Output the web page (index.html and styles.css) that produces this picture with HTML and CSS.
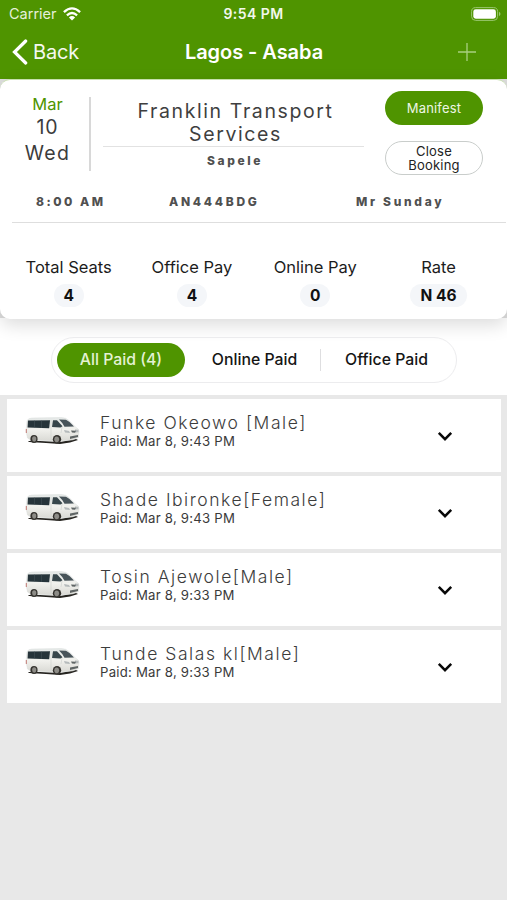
FILE: index.html
```html
<!DOCTYPE html>
<html lang="en">
<head>
<meta charset="utf-8">
<meta name="viewport" content="width=device-width, initial-scale=1">
<title>Lagos - Asaba</title>
<link rel="stylesheet" href="styles.css">
</head>
<body>
<svg class="defs" aria-hidden="true">
  <defs>
    <linearGradient id="body-paint" x1="0" y1="0" x2="0" y2="1">
      <stop offset="0" stop-color="#e4e8e7"/><stop offset=".5" stop-color="#f1f1ed"/><stop offset="1" stop-color="#d9d9d4"/>
    </linearGradient>
    <symbol id="van" viewBox="0 0 56 30">
      <path d="M3 25h12l20 1 16-3 2 1-8 2.500-10 1.500-14-1-17-1z" fill="#25231f"/>
      <path d="M2 5Q3 2 7 2L36 1.500q5 0 8 3l7 7q3 1 3 4l-.5 6-6 2.500-14 1.200-28-1.200-3-2L1 15z" fill="url(#body-paint)" stroke="#d5d8d6" stroke-width=".4"/>
      <path d="M3 4.500l22-.3-.8 8L2.500 11.500z" fill="#26343a"/>
      <path d="M9.500 4.500v7M16.500 4.500v7.500" stroke="#46555a" stroke-width=".5"/>
      <path d="M28 4.200l4 0 5.500 6-2 1.200-8.500-.5z" fill="#37464b"/>
      <path d="M34 3.500l7 .3q4 1.800 8 6.700l-9.500.2q-2-4-5.500-7.200z" fill="#48545a"/>
      <path d="M26 4v20M37 11l-1 6" stroke="#c4c8c6" stroke-width=".5" fill="none"/>
      <path d="M39 14l5 1 1 2-5-.5zM50 13.500l3.500.3v2.400l-3.500.3z" fill="#b5babb"/>
      <path d="M46 14.500l5 .2-1 2-3-.2zM45 20.500l8-1.500v2l-8 2z" fill="#5f6565"/>
      <path d="M.8 13h1.200v4H.8z" fill="#c98f8a"/>
      <ellipse cx="9" cy="23" rx="3.600" ry="4" fill="#35332f"/>
      <ellipse cx="9.200" cy="23" rx="2.100" ry="2.700" fill="#8d8c87"/>
      <ellipse cx="32" cy="23.300" rx="4.200" ry="4.300" fill="#35332f"/>
      <ellipse cx="31.700" cy="23.300" rx="2.400" ry="2.900" fill="#8d8c87"/>
    </symbol>
    <symbol id="chevron" viewBox="0 0 16 12">
      <path d="M1.800 1.900L8 8.200l6.200-6.300" fill="none" stroke="#080808" stroke-width="2.500"/>
    </symbol>
  </defs>
</svg>

<header class="header">
  <div class="status">
    <div class="status-left">
      <span>Carrier</span>
      <svg class="wifi" viewBox="0 0 18 14">
        <g fill="none" stroke="#fff" stroke-width="2.300">
          <path d="M.9 5.100Q9-2.400 17.100 5.100"/><path d="M3.900 8.300q5.100-4.500 10.200 0"/>
        </g>
        <path d="M5.900 10.400q3.100-2.700 6.200 0L9 13.600z" fill="#fff"/>
      </svg>
    </div>
    <span class="clock">9:54 PM</span>
    <svg class="battery" viewBox="0 0 30 14">
      <rect x=".6" y=".6" width="26" height="12.800" rx="4" fill="none" stroke="#9ac66f" stroke-width="1"/>
      <rect x="2.300" y="2.300" width="22.600" height="9.400" rx="2.400" fill="#fff"/>
      <path d="M28 4.800q3 2.200 0 4.400z" fill="#9ac66f"/>
    </svg>
  </div>
  <nav class="nav">
    <a class="back">
      <svg class="back-icon" viewBox="0 0 16 26"><path d="M13.700 2L2.500 13l11.200 11" fill="none" stroke="#fff" stroke-width="3.200" stroke-linecap="round"/></svg>
      <span>Back</span>
    </a>
    <h1 class="title">Lagos - Asaba</h1>
    <svg class="add" viewBox="0 0 18 18"><path d="M9 0v18M0 9h18" stroke="#a9d080" stroke-width="1.300"/></svg>
  </nav>
</header>

<main>
  <div class="trip-wrap">
    <section class="trip">
      <div class="trip-top">
        <div class="date"><span class="month">Mar</span><span class="day">10</span><span class="weekday">Wed</span></div>
        <div class="company">
          <h2 class="company-name">Franklin Transport Services</h2>
          <p class="terminal">Sapele</p>
        </div>
        <div class="actions">
          <button class="btn btn-primary">Manifest</button>
          <button class="btn btn-outline">Close<br>Booking</button>
        </div>
      </div>
      <div class="details"><span class="time">8:00 AM</span><span class="plate">AN444BDG</span><span class="driver">Mr Sunday</span></div>
      <div class="stats">
        <div class="stat"><span>Total Seats</span><b class="pill">4</b></div>
        <div class="stat"><span>Office Pay</span><b class="pill">4</b></div>
        <div class="stat"><span>Online Pay</span><b class="pill">0</b></div>
        <div class="stat"><span>Rate</span><b class="pill pill-wide">N 46</b></div>
      </div>
    </section>
  </div>

  <div class="filter">
    <div class="tabs">
      <button class="tab tab-active">All Paid (4)</button>
      <button class="tab tab-online">Online Paid</button>
      <button class="tab tab-office">Office Paid</button>
    </div>
  </div>

  <section class="list">
    <article class="row">
      <svg class="van"><use href="#van"/></svg>
      <div class="person"><h3 class="name">Funke Okeowo [Male]</h3><p class="paid">Paid: Mar 8, 9:43 PM</p></div>
      <svg class="chevron"><use href="#chevron"/></svg>
    </article>
    <article class="row">
      <svg class="van"><use href="#van"/></svg>
      <div class="person"><h3 class="name">Shade Ibironke[Female]</h3><p class="paid">Paid: Mar 8, 9:43 PM</p></div>
      <svg class="chevron"><use href="#chevron"/></svg>
    </article>
    <article class="row">
      <svg class="van"><use href="#van"/></svg>
      <div class="person"><h3 class="name">Tosin Ajewole[Male]</h3><p class="paid">Paid: Mar 8, 9:33 PM</p></div>
      <svg class="chevron"><use href="#chevron"/></svg>
    </article>
    <article class="row">
      <svg class="van"><use href="#van"/></svg>
      <div class="person"><h3 class="name">Tunde Salas kl[Male]</h3><p class="paid">Paid: Mar 8, 9:33 PM</p></div>
      <svg class="chevron"><use href="#chevron"/></svg>
    </article>
  </section>
</main>
</body>
</html>
```
FILE: styles.css
```css
* { box-sizing: border-box; margin: 0; padding: 0; }
body {
  min-height: 900px;
  background: #e8e8e8;
  color: #1c1c1c;
  font-family: Inter, "Liberation Sans", sans-serif;
  overflow-x: hidden;
}
svg { display: block; flex: none; }
button { font: inherit; border: 0; background: none; white-space: nowrap; }
.defs { position: absolute; width: 0; height: 0; }

.header { height: 79px; background: #4f9400; color: #fff; }
.status {
  display: grid;
  grid-template-columns: 1fr auto 1fr;
  align-items: center;
  height: 27px;
  padding: 0 6px 0 9px;
  font-size: 14.500px;
}
.status-left { display: flex; align-items: center; gap: 6px; color: #e5f0da; }
.wifi { width: 18px; height: 14px; }
.clock { margin-right: 3px; font-weight: 600; font-size: 14px; letter-spacing: .45px; color: #f2f8ec; }
.battery { width: 30px; height: 14px; justify-self: end; }
.nav {
  display: grid;
  grid-template-columns: 1fr auto 1fr;
  align-items: center;
  height: 50px;
  padding: 0 31px 0 12px;
}
.back { display: flex; align-items: center; gap: 5px; font-size: 20px; color: #f4f9ef; letter-spacing: -.2px; }
.back-icon { width: 16px; height: 26px; }
.title { font-size: 20px; font-weight: 600; line-height: 26px; margin-left: 20px; letter-spacing: -.05px; }
.add { width: 18px; height: 18px; justify-self: end; }

.trip-wrap { background: linear-gradient(#dedede 0 239px, #fff 239px); }
.trip {
  position: relative;
  height: 240px;
  background: #fff;
  border-top: 1px solid #c6dfad;
  border-radius: 10px;
  box-shadow: 0 6px 18px rgba(0, 0, 0, .14);
}
.trip-top { display: flex; height: 107px; }
.date {
  display: flex;
  flex-direction: column;
  align-items: center;
  width: 91px;
  height: 74px;
  margin-top: 17px;
  padding-left: 6px;
  border-right: 2px solid #d8d8d8;
  font-size: 19.500px;
  line-height: 26px;
  letter-spacing: 1px;
  color: #3c3c3c;
}
.month { font-size: 16.500px; line-height: 20px; height: 20px; margin-top: -3px; letter-spacing: 0; color: #4f9400; }
.weekday { letter-spacing: 1.400px; }
.company { width: 261px; margin-left: 12px; padding-top: 20px; text-align: center; }
.company-name {
  padding: 0 18px 0 22px;
  height: 47px;
  border-bottom: 1px solid #e2e2e2;
  font-size: 19.500px;
  font-weight: 400;
  line-height: 23px;
  letter-spacing: 1.600px;
  color: #3f3f3f;
}
.terminal { margin-top: 6px; padding-left: 3px; font-size: 12px; font-weight: 800; line-height: 16px; letter-spacing: 2.600px; color: #505050; }
.actions { display: flex; flex-direction: column; gap: 16px; width: 98px; margin: 11px 0 0 21px; }
.btn { height: 34px; border-radius: 17px; font-size: 13px; line-height: 14px; letter-spacing: .2px; }
.btn-primary { background: #4f9400; color: #edf6e4; }
.btn-outline { border: 1px solid #c9cdcb; color: #222; }
.details {
  display: grid;
  grid-template-columns: 157px 138px 1fr;
  height: 36px;
  margin: 0 1px 0 12px;
  border-bottom: 1px solid #dedede;
  font-size: 12px;
  font-weight: 800;
  line-height: 30px;
  letter-spacing: 2.500px;
  color: #505050;
}
.time { padding-left: 24px; }
.plate { letter-spacing: 2.700px; }
.driver { padding-left: 49px; letter-spacing: 2.700px; }
.stats { display: grid; grid-template-columns: repeat(4, 123.300px); padding: 33px 0 0 7px; }
.stat { display: flex; flex-direction: column; align-items: center; gap: 6px; font-size: 16.500px; line-height: 22px; white-space: nowrap; }
.pill { min-width: 30px; height: 23px; border-radius: 12px; background: #f4f6f9; text-align: center; font-size: 15.500px; font-weight: 700; line-height: 23px; color: #111; }
.pill-wide { width: 57px; }

.filter { display: flex; height: 76px; padding: 18px 0 0 51px; background: #fff; }
.tabs {
  position: relative;
  display: flex;
  align-items: center;
  width: 406px;
  height: 46px;
  padding-left: 5px;
  border: 1px solid #ececee;
  border-radius: 23px;
}
.tab { height: 34px; padding-bottom: 2px; font-size: 15.800px; font-weight: 500; color: #151515; }
.tab-active { width: 128px; border-radius: 17px; background: #4f9400; color: #e4f2d4; }
.tab-online { width: 136px; height: 22px; padding-left: 4px; border-right: 1px solid #dedee0; }
.tab-office { width: 131px; }

.list { display: grid; gap: 4px; padding: 4px 6px 0 7px; }
.row { display: flex; height: 73px; background: #fff; }
.van { width: 56px; height: 30px; margin: 17px 0 0 18px; }
.person { width: 330px; margin: 13px 0 0 19px; }
.name { font-size: 17.500px; font-weight: 300; line-height: 22px; letter-spacing: 1.550px; color: #3c3c3c; white-space: nowrap; }
.paid { font-size: 13.200px; line-height: 15px; letter-spacing: .22px; color: #3a3a3a; }
.chevron { width: 16px; height: 12px; margin: 32px 0 0 7px; }
```
